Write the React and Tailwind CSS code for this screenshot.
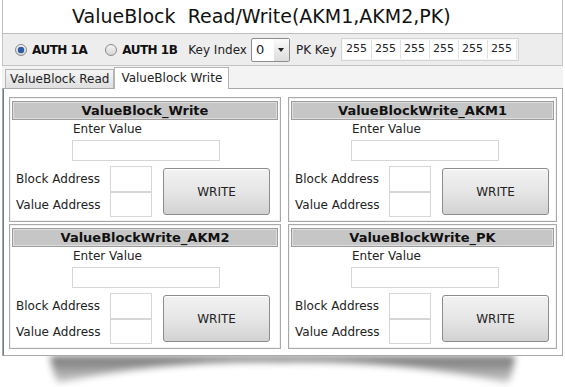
import React from "react";

const FONT = { fontFamily: '"DejaVu Sans", Verdana, sans-serif' };
const KEYS = ["255", "255", "255", "255", "255", "255"];
const GROUPS = ["ValueBlock_Write", "ValueBlockWrite_AKM1", "ValueBlockWrite_AKM2", "ValueBlockWrite_PK"];

function Radio({ on }) {
  return (
    <span className="w-[12px] h-[12px] rounded-full border border-[#8a8a8a] bg-gradient-to-b from-[#f4f4f4] to-[#d6d6d6] flex items-center justify-center">
      {on && <span className="w-[6px] h-[6px] rounded-full bg-[#2a5ea8] shadow-[0_0_1px_#103060]"/>}
    </span>
  );
}

function Group({ title }) {
  return (
    <div className="border border-[#a9a9a9] bg-white px-[2px] pt-[3px] pb-[4px] shadow-[inset_0_0_0_1px_#f2f2f2]">
      <div className="h-[19px] bg-[#c6c6c6] border border-[#9c9c9c] shadow-[inset_0_0_0_1px_#dedede] flex items-center justify-center text-[13px] font-bold text-[#111]">
        {title}
      </div>
      <div className="pl-[61px] pt-[2px] text-[12px] text-[#222] leading-[14px]">Enter Value</div>
      <div className="ml-[60px] mt-[4px] w-[148px] h-[21px] border border-[#d6d6d6] bg-white"/>
      <div className="flex mt-[5px]">
        <div className="flex flex-col">
          <div className="flex items-center">
            <span className="w-[98px] pl-[4px] text-[12px] text-[#222]">Block Address</span>
            <span className="w-[42px] h-[26px] border border-[#d6d6d6] bg-white"/>
          </div>
          <div className="flex items-center">
            <span className="w-[98px] pl-[4px] text-[12px] text-[#222]">Value Address</span>
            <span className="w-[42px] h-[25px] border border-[#d6d6d6] bg-white"/>
          </div>
        </div>
        <button className="ml-[11px] mt-[2px] w-[107px] h-[47px] rounded-[3px] border border-[#8c8c8c] bg-gradient-to-b from-[#f2f2f2] via-[#e6e6e6] to-[#d2d2d2] text-[12px] text-[#222] shadow-[inset_0_1px_0_#fff]">
          WRITE
        </button>
      </div>
    </div>
  );
}

export default function App() {
  return (
    <div className="w-[565px] h-[387px] bg-white overflow-hidden" style={FONT}>
      {/* Title */}
      <div className="mx-[2px] h-[34px] border-x border-b border-[#bdbdbd] bg-white flex items-center pl-[69px] text-[19px] text-[#111]">
        ValueBlock&nbsp;&nbsp;Read/Write(AKM1,AKM2,PK)
      </div>

      {/* Toolbar */}
      <div className="mx-[2px] h-[32px] border-x border-b border-[#c4c4c4] bg-[#ededed] flex items-center pl-[12px] text-[12px] text-[#222]">
        <label className="flex items-center gap-[5px] font-bold text-[12px] tracking-[-0.5px] text-[#111]"><Radio on/>AUTH 1A</label>
        <label className="flex items-center gap-[5px] font-bold text-[12px] tracking-[-0.5px] text-[#111] ml-[18px]"><Radio/>AUTH 1B</label>
        <span className="ml-[11px]">Key Index</span>
        <div className="ml-[4px] w-[39px] h-[24px] rounded-[2px] border border-[#8c8c8c] bg-white flex items-center">
          <span className="pl-[4px] text-[13px] flex-1">0</span>
          <span className="w-[15px] h-full flex items-center justify-center bg-gradient-to-b from-[#fafafa] to-[#dcdcdc]">
            <span className="border-x-[3.5px] border-x-transparent border-t-[4px] border-t-[#222]"/>
          </span>
        </div>
        <span className="ml-[6px]">PK Key</span>
        <div className="ml-[4px] flex border border-[#d4d4d4] bg-[#f7f7f7] p-[1px]">
          {KEYS.map((k, i) => (
            <span key={i} className="w-[29px] h-[19px] bg-white border-r border-[#e2e2e2] flex items-center justify-center text-[11px]">{k}</span>
          ))}
        </div>
      </div>

      {/* Tabs */}
      <div className="mx-[2px] h-[22px] bg-[#f3f3f3] flex items-end pl-[3px] text-[12px] text-[#222]">
        <div className="h-[19px] px-[4px] border border-b-0 border-[#b5b5b5] bg-gradient-to-b from-[#f4f4f4] to-[#dfdfdf] flex items-center">ValueBlock Read</div>
        <div className="h-[22px] px-[6px] border border-b-0 border-[#b5b5b5] bg-white flex items-start pt-[1px] -mb-px relative">ValueBlock Write</div>
      </div>

      {/* Panel */}
      <div className="mx-[2px] h-[268px] border border-[#a9a9a9] bg-white shadow-[inset_1px_0_0_#6d7c90] px-[6px] pt-[8px] grid grid-cols-[272px_269px] gap-x-[7px] gap-y-[2px] content-start">
        {GROUPS.map(g => <Group key={g} title={g}/>)}
      </div>

      {/* Curved shadow */}
      <svg width="565" height="32" className="block">
        <defs>
          <filter id="b" x="-10%" y="-50%" width="120%" height="200%">
            <feGaussianBlur stdDeviation="3.5"/>
          </filter>
          <linearGradient id="g" x1="0" y1="0" x2="0" y2="1">
            <stop offset="0" stopColor="#333"/>
            <stop offset="1" stopColor="#bbb"/>
          </linearGradient>
        </defs>
        <path d="M50 0 L515 0 Q513 18 508 27 Q400 4 282 6 Q160 4 58 27 Q53 18 50 0 Z" fill="url(#g)" filter="url(#b)" opacity="0.7"/>
      </svg>
    </div>
  );
}
